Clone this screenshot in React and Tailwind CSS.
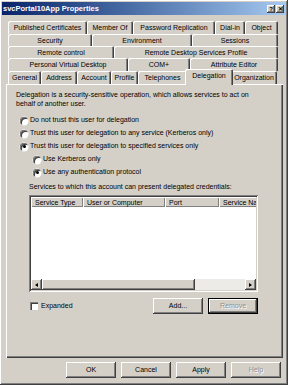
import React from "react";

const raised =
  "shadow-[inset_-1px_-1px_#404040,inset_1px_1px_#ffffff,inset_-2px_-2px_#808080,inset_2px_2px_#d4d0c8]";
const sunken =
  "shadow-[inset_1px_1px_#808080,inset_-1px_-1px_#ffffff,inset_2px_2px_#404040,inset_-2px_-2px_#d4d0c8]";

const tabRows = [
  { h: "h-[13px]", tabs: [["Published Certificates", 79], ["Member Of", 46], ["Password Replication", 82], ["Dial-in", 30], ["Object", 33]] },
  { h: "h-[12px]", tabs: [["Security", 84], ["Environment", 100], ["Sessions", 86]] },
  { h: "h-[12px]", tabs: [["Remote control", 106], ["Remote Desktop Services Profile", 164]] },
  { h: "h-[13px]", tabs: [["Personal Virtual Desktop", 120], ["COM+", 62], ["Attribute Editor", 88]] },
];

const frontRow = [["General", 33], ["Address", 36], ["Account", 34], ["Profile", 27], ["Telephones", 49], ["Delegation", 44], ["Organization", 46]];

function Tab({ label, w, selected }) {
  if (selected) {
    return (
      <div
        style={{ width: w + 4 }}
        className="relative z-10 -mx-[2px] -mt-[2px] h-[16px] shrink-0 rounded-t-[2px] bg-[#d4d0c8] shadow-[inset_1px_1px_#ffffff,inset_-1px_0_#404040,inset_-2px_0_#808080] flex items-start justify-center pt-[2px] leading-[9px]"
      >
        {label}
      </div>
    );
  }
  return (
    <div
      style={{ width: w }}
      className="h-full shrink-0 rounded-t-[2px] bg-[#d4d0c8] shadow-[inset_1px_1px_#ffffff,inset_-1px_0_#404040,inset_-2px_0_#808080] flex items-center justify-center leading-[9px] whitespace-nowrap"
    >
      {label}
    </div>
  );
}

function Radio({ checked }) {
  return (
    <div className="relative w-[8px] h-[8px] shrink-0 rounded-full bg-white shadow-[inset_1px_1px_#808080,inset_2px_2px_#404040,0_0_0_0.5px_#ffffff] flex items-center justify-center">
      {checked && <div className="w-[3px] h-[3px] rounded-full bg-black" />}
    </div>
  );
}

function RadioRow({ checked, label, indent }) {
  return (
    <div className={`h-[13px] flex items-center ${indent ? "pl-[17px]" : "pl-[4px]"}`}>
      <Radio checked={checked} />
      <span className="ml-[1px] pl-[1px] whitespace-nowrap">{label}</span>
    </div>
  );
}

function Button({ children, disabled, dark }) {
  return (
    <div
      className={`w-[50px] h-[16px] flex items-center justify-center bg-[#d4d0c8] ${dark ? "border border-black" : ""} ${raised} ${
        disabled ? "text-[#8f8f8f] [text-shadow:1px_1px_#ffffff]" : "text-black"
      }`}
    >
      {children}
    </div>
  );
}

export default function App() {
  return (
    <div className="w-[291px] h-[389px] bg-white [font-family:'Liberation_Sans',Arial,sans-serif] text-[7px] text-black">
      <div className={`w-[288px] h-[385px] bg-[#d4d0c8] p-[2px] flex flex-col ${raised} shadow-[inset_-1px_-1px_#404040,inset_1px_1px_#ffffff,inset_-2px_-2px_#808080,2px_2px_3px_rgba(0,0,0,0.55)]`}>
        {/* Title bar */}
        <div className="h-[13px] shrink-0 flex items-center justify-between bg-gradient-to-r from-[#0a246a] to-[#a6caf0] pl-[1px] pr-[2px]">
          <span className="text-white font-bold text-[7.5px] leading-none whitespace-nowrap">svcPortal10App Properties</span>
          <div className="flex gap-[1px]">
            <div className={`w-[8px] h-[8px] bg-[#d4d0c8] ${raised} flex items-center justify-center text-[6px] font-bold leading-none`}>?</div>
            <div className={`w-[8px] h-[8px] bg-[#d4d0c8] ${raised} flex items-center justify-center text-[6px] font-bold leading-none`}>✕</div>
          </div>
        </div>

        {/* Tabs + panel */}
        <div className="pl-[4px] pr-[3px] pt-[6px] flex flex-col">
          <div className="pl-[2px] flex flex-col">
            {tabRows.map((row, i) => (
              <div key={i} className={`${row.h} flex`}>
                {row.tabs.map(([l, w]) => (
                  <Tab key={l} label={l} w={w} />
                ))}
              </div>
            ))}
            <div className="h-[13px] flex">
              {frontRow.map(([l, w]) => (
                <Tab key={l} label={l} w={w} selected={l === "Delegation"} />
              ))}
            </div>
          </div>

          {/* Panel */}
          <div className="h-[274px] bg-[#d4d0c8] shadow-[inset_1px_1px_#ffffff,inset_-1px_-1px_#404040,inset_-2px_-2px_#808080] pl-[10px] pt-[6px] flex flex-col">
            <div className="leading-[9px] whitespace-nowrap">
              Delegation is a security-sensitive operation, which allows services to act on
              <br />
              behalf of another user.
            </div>
            <div className="mt-[6px] flex flex-col">
              <RadioRow label="Do not trust this user for delegation" />
              <RadioRow label="Trust this user for delegation to any service (Kerberos only)" />
              <RadioRow checked label="Trust this user for delegation to specified services only" />
              <RadioRow indent label="Use Kerberos only" />
              <RadioRow indent checked label="Use any authentication protocol" />
            </div>
            <div className="pl-[13px] flex flex-col">
              <div className="mt-[3px] leading-[9px] whitespace-nowrap">
                Services to which this account can present delegated credentials:
              </div>
              {/* List view */}
              <div className={`mt-[4px] w-[229px] h-[97px] bg-white p-[2px] flex flex-col ${sunken}`}>
                <div className="h-[10px] flex overflow-hidden shrink-0">
                  {[["Service Type", 52], ["User or Computer", 82], ["Port", 54], ["Service Name", 60]].map(([l, w]) => (
                    <div
                      key={l}
                      style={{ width: w }}
                      className="h-full shrink-0 bg-[#d4d0c8] shadow-[inset_1px_1px_#ffffff,inset_-1px_-1px_#808080] pl-[4px] flex items-center leading-none whitespace-nowrap overflow-hidden"
                    >
                      {l}
                    </div>
                  ))}
                </div>
                <div className="flex-1" />
                <div className="h-[11px] flex shrink-0 bg-[#ecebe8]">
                  <div className={`w-[11px] h-[11px] bg-[#d4d0c8] ${raised} flex items-center justify-center`}>
                    <div className="w-0 h-0 border-y-[2.5px] border-y-transparent border-r-[3px] border-r-black" />
                  </div>
                  <div className={`w-[153px] h-[11px] bg-[#d4d0c8] ${raised}`} />
                  <div className="flex-1" />
                  <div className={`w-[11px] h-[11px] bg-[#d4d0c8] ${raised} flex items-center justify-center`}>
                    <div className="w-0 h-0 border-y-[2.5px] border-y-transparent border-l-[3px] border-l-black" />
                  </div>
                </div>
              </div>
              {/* Expanded + Add/Remove */}
              <div className="mt-[6px] w-[229px] h-[16px] flex items-center">
                <div className="ml-[1px] w-[8px] h-[8px] bg-white shadow-[inset_1px_1px_#808080,inset_2px_2px_#404040]" />
                <span className="ml-[3px]">Expanded</span>
                <div className="flex-1" />
                <div className="flex gap-[5px]">
                  <Button>Add...</Button>
                  <Button disabled dark>Remove</Button>
                </div>
              </div>
            </div>
          </div>

          {/* Bottom buttons */}
          <div className="mt-[4px] flex justify-end gap-[5px] pr-[2px]">
            <Button>OK</Button>
            <Button>Cancel</Button>
            <Button>Apply</Button>
            <Button disabled>Help</Button>
          </div>
        </div>
      </div>
    </div>
  );
}
